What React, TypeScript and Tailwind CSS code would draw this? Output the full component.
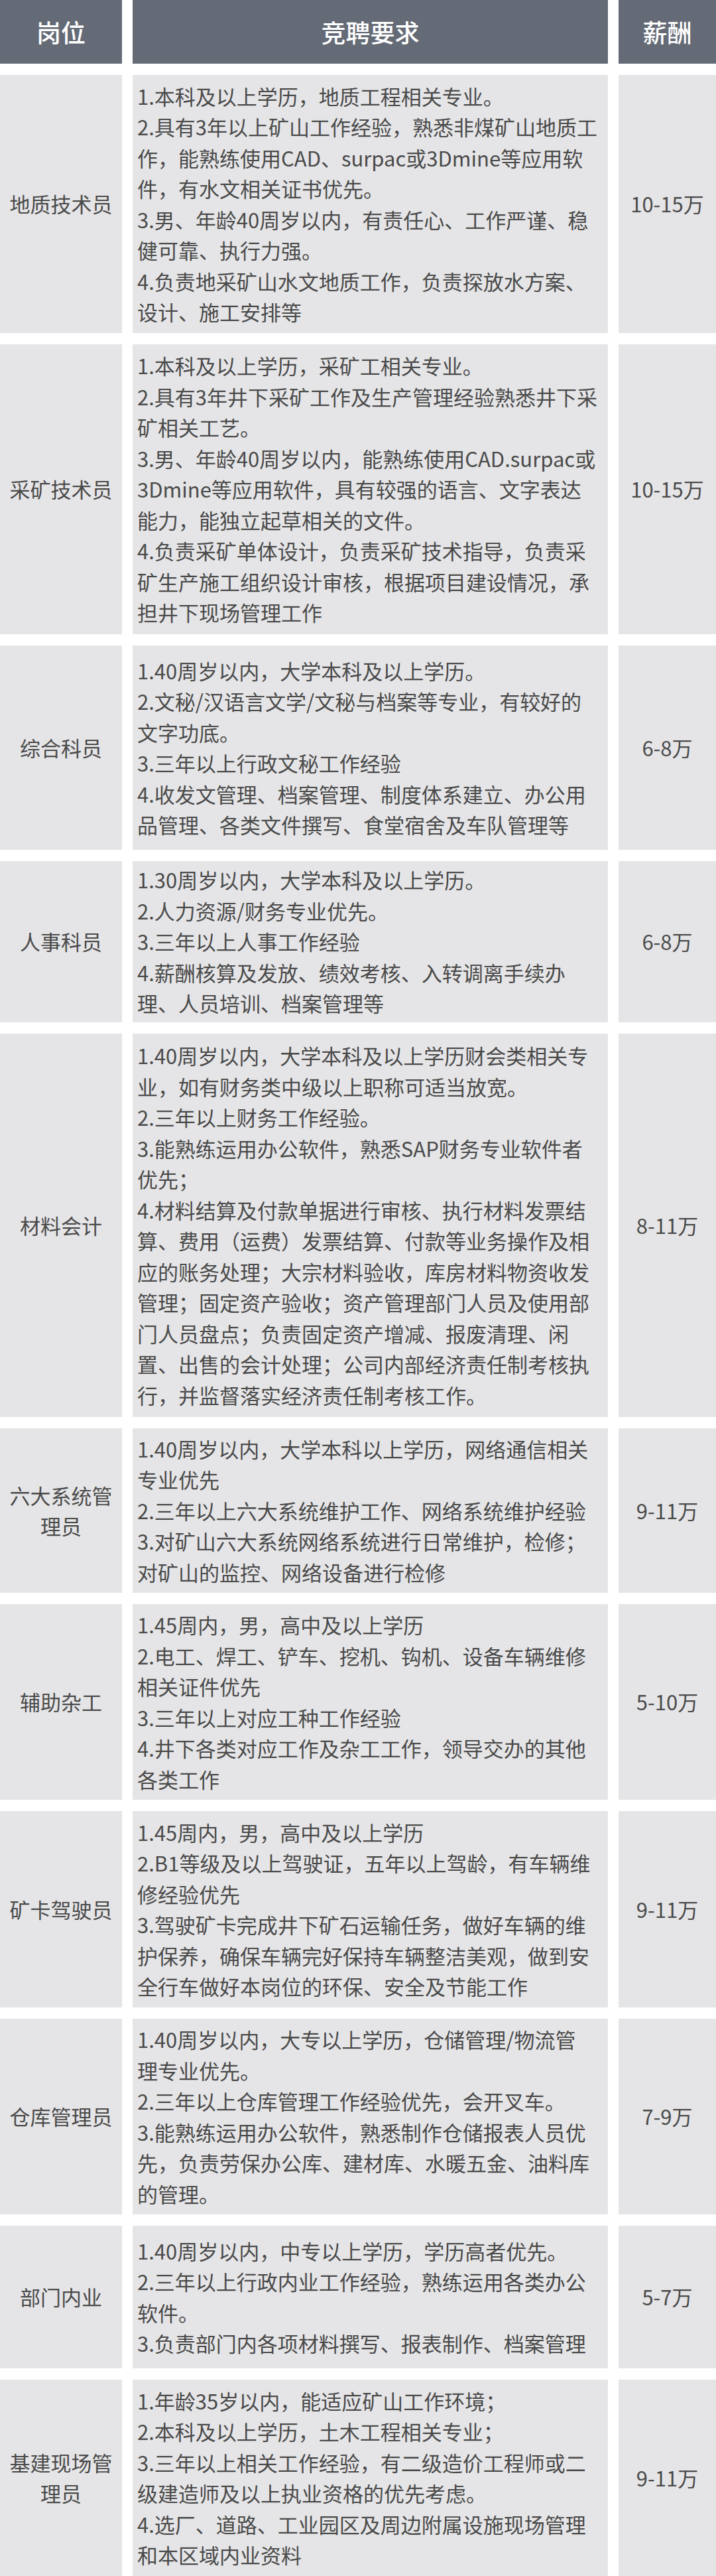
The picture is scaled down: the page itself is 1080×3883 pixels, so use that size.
import React from 'react';

type Job = { title: string[]; lines: string[]; pay: string; h: string };

const jobs: Job[] = [
  {
    title: ['地质技术员'], pay: '10-15万', h: 'h-[389px]',
    lines: [
      '1.本科及以上学历，地质工程相关专业。',
      '2.具有3年以上矿山工作经验，熟悉非煤矿山地质工',
      '作，能熟练使用CAD、surpac或3Dmine等应用软',
      '件，有水文相关证书优先。',
      '3.男、年龄40周岁以内，有责任心、工作严谨、稳',
      '健可靠、执行力强。',
      '4.负责地采矿山水文地质工作，负责探放水方案、',
      '设计、施工安排等',
    ],
  },
  {
    title: ['采矿技术员'], pay: '10-15万', h: 'h-[437px]',
    lines: [
      '1.本科及以上学历，采矿工相关专业。',
      '2.具有3年井下采矿工作及生产管理经验熟悉井下采',
      '矿相关工艺。',
      '3.男、年龄40周岁以内，能熟练使用CAD.surpac或',
      '3Dmine等应用软件，具有较强的语言、文字表达',
      '能力，能独立起草相关的文件。',
      '4.负责采矿单体设计，负责采矿技术指导，负责采',
      '矿生产施工组织设计审核，根据项目建设情况，承',
      '担井下现场管理工作',
    ],
  },
  {
    title: ['综合科员'], pay: '6-8万', h: 'h-[308px]',
    lines: [
      '1.40周岁以内，大学本科及以上学历。',
      '2.文秘/汉语言文学/文秘与档案等专业，有较好的',
      '文字功底。',
      '3.三年以上行政文秘工作经验',
      '4.收发文管理、档案管理、制度体系建立、办公用',
      '品管理、各类文件撰写、食堂宿舍及车队管理等',
    ],
  },
  {
    title: ['人事科员'], pay: '6-8万', h: 'h-[243px]',
    lines: [
      '1.30周岁以内，大学本科及以上学历。',
      '2.人力资源/财务专业优先。',
      '3.三年以上人事工作经验',
      '4.薪酬核算及发放、绩效考核、入转调离手续办',
      '理、人员培训、档案管理等',
    ],
  },
  {
    title: ['材料会计'], pay: '8-11万', h: 'h-[578px]',
    lines: [
      '1.40周岁以内，大学本科及以上学历财会类相关专',
      '业，如有财务类中级以上职称可适当放宽。',
      '2.三年以上财务工作经验。',
      '3.能熟练运用办公软件，熟悉SAP财务专业软件者',
      '优先；',
      '4.材料结算及付款单据进行审核、执行材料发票结',
      '算、费用（运费）发票结算、付款等业务操作及相',
      '应的账务处理；大宗材料验收，库房材料物资收发',
      '管理；固定资产验收；资产管理部门人员及使用部',
      '门人员盘点；负责固定资产增减、报废清理、闲',
      '置、出售的会计处理；公司内部经济责任制考核执',
      '行，并监督落实经济责任制考核工作。',
    ],
  },
  {
    title: ['六大系统管', '理员'], pay: '9-11万', h: 'h-[248px]',
    lines: [
      '1.40周岁以内，大学本科以上学历，网络通信相关',
      '专业优先',
      '2.三年以上六大系统维护工作、网络系统维护经验',
      '3.对矿山六大系统网络系统进行日常维护，检修；',
      '对矿山的监控、网络设备进行检修',
    ],
  },
  {
    title: ['辅助杂工'], pay: '5-10万', h: 'h-[295px]',
    lines: [
      '1.45周内，男，高中及以上学历',
      '2.电工、焊工、铲车、挖机、钩机、设备车辆维修',
      '相关证件优先',
      '3.三年以上对应工种工作经验',
      '4.井下各类对应工作及杂工工作，领导交办的其他',
      '各类工作',
    ],
  },
  {
    title: ['矿卡驾驶员'], pay: '9-11万', h: 'h-[296px]',
    lines: [
      '1.45周内，男，高中及以上学历',
      '2.B1等级及以上驾驶证，五年以上驾龄，有车辆维',
      '修经验优先',
      '3.驾驶矿卡完成井下矿石运输任务，做好车辆的维',
      '护保养，确保车辆完好保持车辆整洁美观，做到安',
      '全行车做好本岗位的环保、安全及节能工作',
    ],
  },
  {
    title: ['仓库管理员'], pay: '7-9万', h: 'h-[295px]',
    lines: [
      '1.40周岁以内，大专以上学历，仓储管理/物流管',
      '理专业优先。',
      '2.三年以上仓库管理工作经验优先，会开叉车。',
      '3.能熟练运用办公软件，熟悉制作仓储报表人员优',
      '先，负责劳保办公库、建材库、水暖五金、油料库',
      '的管理。',
    ],
  },
  {
    title: ['部门内业'], pay: '5-7万', h: 'h-[215px]',
    lines: [
      '1.40周岁以内，中专以上学历，学历高者优先。',
      '2.三年以上行政内业工作经验，熟练运用各类办公',
      '软件。',
      '3.负责部门内各项材料撰写、报表制作、档案管理',
    ],
  },
  {
    title: ['基建现场管', '理员'], pay: '9-11万', h: 'h-[296px]',
    lines: [
      '1.年龄35岁以内，能适应矿山工作环境；',
      '2.本科及以上学历，土木工程相关专业；',
      '3.三年以上相关工作经验，有二级造价工程师或二',
      '级建造师及以上执业资格的优先考虑。',
      '4.选厂、道路、工业园区及周边附属设施现场管理',
      '和本区域内业资料',
    ],
  },
];

const cols = 'grid grid-cols-[184px_717px_1fr] gap-x-4';

function Row({ job }: { job: Job }) {
  return (
    <div className={`${cols} ${job.h}`}>
      <div className="flex flex-col items-center justify-center bg-[#e5e5e7] text-center">
        {job.title.map((t) => <div key={t}>{t}</div>)}
      </div>
      <div className="flex flex-col justify-center bg-[#e5e5e7] pl-[7px]">
        {job.lines.map((l, i) => <div key={i} className="whitespace-nowrap">{l}</div>)}
      </div>
      <div className="flex items-center justify-center bg-[#e5e5e7]">{job.pay}</div>
    </div>
  );
}

export default function App() {
  return (
    <div className="flex w-[1080px] flex-col gap-y-[17px] bg-white font-['Noto_Sans_CJK_SC','Noto_Sans',sans-serif] text-[31px] leading-[46.5px] text-[#4a4a4a]">
      <div className={`${cols} h-[96px] text-[37px] font-medium text-white`}>
        <div className="flex items-center justify-center bg-[#656b76]">岗位</div>
        <div className="flex items-center justify-center bg-[#656b76]">竞聘要求</div>
        <div className="flex items-center justify-center bg-[#656b76]">薪酬</div>
      </div>
      {jobs.map((j) => <Row key={j.title.join('')} job={j} />)}
    </div>
  );
}
